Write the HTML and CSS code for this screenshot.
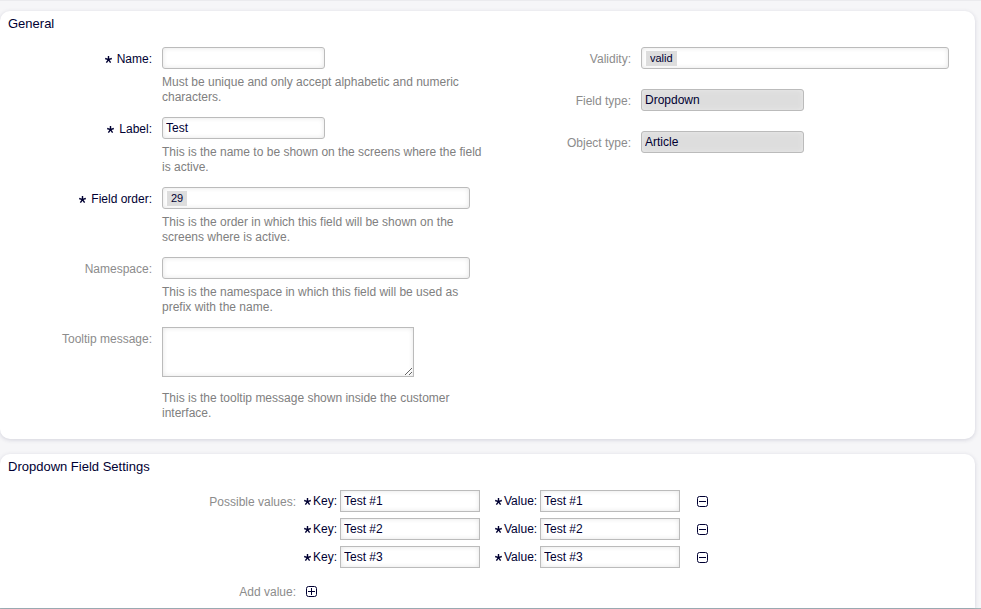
FILE: index.html
```html
<!DOCTYPE html>
<html lang="en">
<head>
<meta charset="utf-8">
<title>Dynamic Field - Dropdown</title>
<link rel="stylesheet" href="styles.css">
</head>
<body>
<svg class="sprite" aria-hidden="true">
  <symbol id="star" viewBox="0 0 7 7"><path d="M3.5 3.6V0M3.5 3.6L.2 2.5M3.5 3.6L6.8 2.5M3.5 3.6L1.4 6.6M3.5 3.6L5.6 6.6" stroke="currentColor" stroke-width="1.4" fill="none"/></symbol>
  <symbol id="minus" viewBox="0 0 11 11"><rect x=".5" y=".5" width="10" height="10" rx="2" fill="none" stroke="currentColor"/><path d="M2 5.5h7" stroke="currentColor"/></symbol>
  <symbol id="plus" viewBox="0 0 11 11"><rect x=".5" y=".5" width="10" height="10" rx="2" fill="none" stroke="currentColor"/><path d="M2 5.5h7M5.5 2v7" stroke="currentColor"/></symbol>
</svg>
<main class="page">
  <section class="card">
    <h2>General</h2>
    <div class="columns">
      <div class="column">
        <div class="row">
          <label for="name"><svg class="star"><use href="#star"/></svg>Name:</label>
          <div class="field">
            <input class="control short" id="name" type="text">
            <p>Must be unique and only accept alphabetic and numeric characters.</p>
          </div>
        </div>
        <div class="row">
          <label for="label"><svg class="star"><use href="#star"/></svg>Label:</label>
          <div class="field">
            <input class="control short" id="label" type="text" value="Test">
            <p>This is the name to be shown on the screens where the field is active.</p>
          </div>
        </div>
        <div class="row">
          <label for="order"><svg class="star"><use href="#star"/></svg>Field order:</label>
          <div class="field">
            <select class="control chip chip-number" id="order"><option>29</option></select>
            <p>This is the order in which this field will be shown on the screens where is active.</p>
          </div>
        </div>
        <div class="row">
          <label class="optional" for="namespace">Namespace:</label>
          <div class="field">
            <input class="control" id="namespace" type="text">
            <p>This is the namespace in which this field will be used as prefix with the name.</p>
          </div>
        </div>
        <div class="row tooltip">
          <label class="optional" for="tooltip">Tooltip message:</label>
          <div class="field">
            <textarea class="control" id="tooltip"></textarea>
            <p>This is the tooltip message shown inside the customer interface.</p>
          </div>
        </div>
      </div>
      <div class="column side">
        <div class="row">
          <label class="optional" for="validity">Validity:</label>
          <div class="field"><select class="control chip chip-word" id="validity"><option>valid</option></select></div>
        </div>
        <div class="row">
          <label class="optional" for="type">Field type:</label>
          <div class="field"><input class="control short" id="type" type="text" value="Dropdown" readonly></div>
        </div>
        <div class="row">
          <label class="optional" for="object">Object type:</label>
          <div class="field"><input class="control short" id="object" type="text" value="Article" readonly></div>
        </div>
      </div>
    </div>
  </section>
  <section class="card settings">
    <h2>Dropdown Field Settings</h2>
    <div class="values">
      <span class="caption">Possible values:</span>
      <div class="pairs">
        <div class="pair">
          <label for="k1"><svg class="star"><use href="#star"/></svg>Key:</label><input class="control" id="k1" type="text" value="Test #1">
          <label class="second" for="v1"><svg class="star"><use href="#star"/></svg>Value:</label><input class="control" id="v1" type="text" value="Test #1">
          <button type="button" aria-label="Remove value"><svg><use href="#minus"/></svg></button>
        </div>
        <div class="pair">
          <label for="k2"><svg class="star"><use href="#star"/></svg>Key:</label><input class="control" id="k2" type="text" value="Test #2">
          <label class="second" for="v2"><svg class="star"><use href="#star"/></svg>Value:</label><input class="control" id="v2" type="text" value="Test #2">
          <button type="button" aria-label="Remove value"><svg><use href="#minus"/></svg></button>
        </div>
        <div class="pair">
          <label for="k3"><svg class="star"><use href="#star"/></svg>Key:</label><input class="control" id="k3" type="text" value="Test #3">
          <label class="second" for="v3"><svg class="star"><use href="#star"/></svg>Value:</label><input class="control" id="v3" type="text" value="Test #3">
          <button type="button" aria-label="Remove value"><svg><use href="#minus"/></svg></button>
        </div>
      </div>
      <label class="caption" for="add">Add value:</label>
      <div class="add"><button type="button" id="add"><svg><use href="#plus"/></svg></button></div>
    </div>
  </section>
</main>
</body>
</html>
```
FILE: styles.css
```css
* { box-sizing: border-box; }

body {
  margin: 0;
  background: #f6f6f8;
  color: #000032;
  font: 12px/15px "Liberation Sans", Arial, sans-serif;
}

.sprite { display: none; }

.page {
  display: flex;
  flex-direction: column;
  gap: 15px;
  min-height: 100vh;
  padding: 10px 6px 0 0;
  border-top: 1px solid #ebebee;
  border-bottom: 1px solid #a7b8bb;
}

.card {
  background: #fff;
  border-radius: 10px;
  box-shadow: 0 1px 4px rgba(50, 50, 93, 0.18);
}

.card:first-child { padding-bottom: 18px; }

.settings {
  flex: 1;
  border-radius: 10px 10px 0 0;
}

h2 {
  margin: 0;
  padding: 5px 8px 0;
  font-size: 13px;
  font-weight: normal;
  line-height: 16px;
}

.columns {
  display: grid;
  grid-template-columns: 33fr 32fr;
  padding-top: 15px;
}

.column {
  display: flex;
  flex-direction: column;
  gap: 12px;
  padding-right: 10px;
}

.row {
  display: flex;
  gap: 10px;
}

.row > label {
  flex: none;
  width: 152px;
  padding-top: 5px;
  text-align: right;
}

.side { gap: 20px; }
.side .row > label { width: 136px; }

.row > .optional, .caption { color: #8c8c8c; }

.field { flex: 1; }

.field p {
  margin: 6px 0 0;
  color: #808080;
}

.tooltip p { margin-top: 14px; }

.star {
  width: 7px;
  height: 7px;
  margin-right: 5px;
}

.control {
  display: block;
  width: 308px;
  max-width: 100%;
  height: 22px;
  margin: 0;
  padding: 0 3px;
  border: 1px solid #bbb;
  border-radius: 3px;
  background: #fff;
  box-shadow: inset 0 0 5px #e4e4e4;
  color: #000032;
  font: inherit;
  outline: 0;
}

.short { width: 163px; }

.control[readonly] {
  background: #ddd;
  box-shadow: inset 0 0 5px #eaeaea;
}

textarea.control {
  width: 252px;
  height: 50px;
  border-radius: 0;
}

.chip {
  appearance: none;
  padding: 0 8px;
  background: #fff linear-gradient(#ddd, #ddd) 4px 3px no-repeat;
  font-size: 11px;
}

.chip-number { background-size: 20px 15px; }
.chip-word { background-size: 31px 15px; }

.values {
  display: grid;
  grid-template-columns: 296px 1fr;
  gap: 12px 8px;
  padding-top: 15px;
}

.caption {
  padding-top: 5px;
  text-align: right;
}

.pairs {
  display: flex;
  flex-direction: column;
  gap: 6px;
}

.pair {
  display: flex;
  align-items: center;
}

.pair label { width: 36px; }

.pair .second {
  width: 45px;
  margin-left: 15px;
}

.pair .star { margin-right: 2px; }

.pair .control {
  width: 140px;
  border-radius: 0;
}

button {
  display: block;
  padding: 0;
  border: 0;
  background: none;
  color: #000032;
}

button svg {
  display: block;
  width: 11px;
  height: 11px;
}

.pair button { margin-left: 17px; }

.add { padding: 6px 2px; }
```
